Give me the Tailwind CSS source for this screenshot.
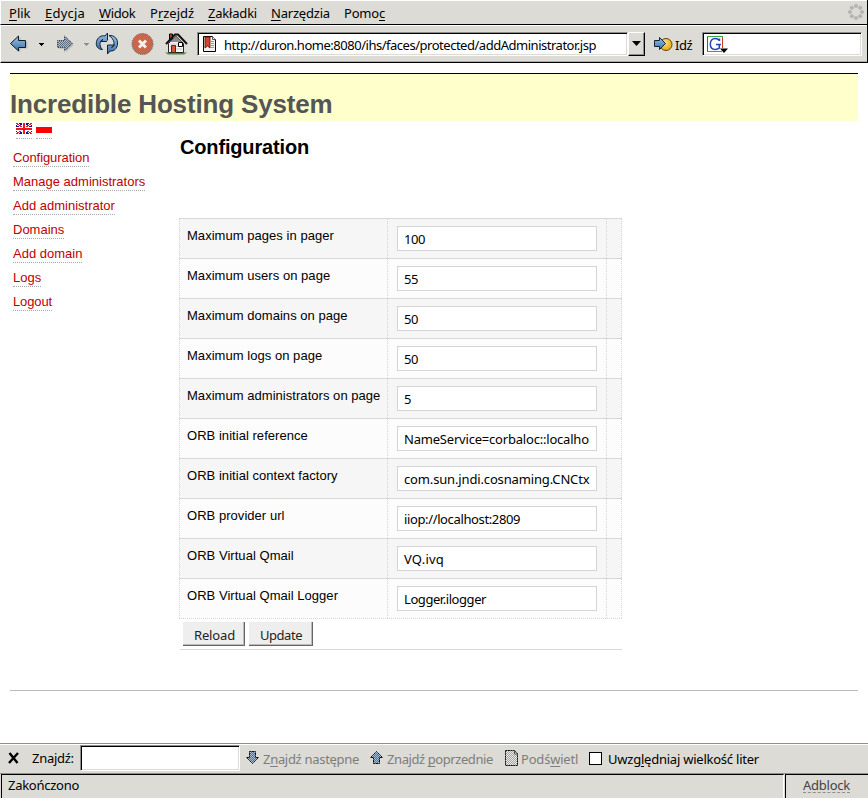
<!DOCTYPE html>
<html lang="pl">
<head>
<meta charset="utf-8">
<title>Incredible Hosting System</title>
<script src="https://cdn.jsdelivr.net/npm/@tailwindcss/browser@4"></script>
</head>
<body class="bg-white overflow-hidden">
<svg class="absolute w-0 h-0" aria-hidden="true"><defs>
  <pattern id="ckBlue" width="2" height="2" patternUnits="userSpaceOnUse"><rect width="2" height="2" fill="#a3bcd6"/><path d="M0 0h1v1H0zM1 1h1v1H1z" fill="#5f6f80"/></pattern>
  <pattern id="ckRed" width="2" height="2" patternUnits="userSpaceOnUse"><rect width="2" height="2" fill="#cf6f52"/><path d="M0 0h1v1H0zM1 1h1v1H1z" fill="#8f7466"/></pattern>
  <pattern id="ckGray" width="2" height="2" patternUnits="userSpaceOnUse"><rect width="2" height="2" fill="#e8e8e6"/><path d="M0 0h1v1H0zM1 1h1v1H1z" fill="#a4a4a2"/></pattern>
  <linearGradient id="gBlue" x1="0" y1="0" x2="0" y2="1"><stop offset="0" stop-color="#9cc3e6"/><stop offset="1" stop-color="#3a70a6"/></linearGradient>
  <radialGradient id="gGold" cx=".4" cy=".35"><stop offset="0" stop-color="#ffe680"/><stop offset="1" stop-color="#efb425"/></radialGradient>
</defs></svg>

<div class="flex flex-col w-[868px] h-[798px] text-[13px] leading-5 text-black whitespace-nowrap font-['Noto_Sans','Open_Sans',sans-serif]">

  <!-- Menu bar -->
  <header class="border-r border-black shrink-0">
    <nav class="flex items-start h-[25px] bg-[#dcdbd5] border-t border-t-white border-l border-l-white border-b border-b-black pl-2 pt-[2px] pr-[4px]">
      <span class="w-9"><u class="underline underline-offset-2 decoration-1">P</u>lik</span>
      <span class="w-[54px] tracking-[0.2px]"><u class="underline underline-offset-2 decoration-1">E</u>dycja</span>
      <span class="w-[51px] tracking-[-0.4px]"><u class="underline underline-offset-2 decoration-1">W</u>idok</span>
      <span class="w-[58px]">P<u class="underline underline-offset-2 decoration-1">r</u>zejdź</span>
      <span class="w-[63px] tracking-[-0.2px]"><u class="underline underline-offset-2 decoration-1">Z</u>akładki</span>
      <span class="w-[73px] tracking-[-0.2px]"><u class="underline underline-offset-2 decoration-1">N</u>arzędzia</span>
      <span class="tracking-[-0.2px]">Pomo<u class="underline underline-offset-2 decoration-1">c</u></span>
      <svg class="ml-auto mr-[-1px]" width="16" height="18" viewBox="0 0 16 18" fill="#b4b4b0"><circle cx="8" cy="3" r="2"/><circle cx="12.2" cy="4.8" r="2"/><circle cx="14" cy="9" r="2"/><circle cx="12.2" cy="13.2" r="2"/><circle cx="8" cy="15" r="2"/><circle cx="3.8" cy="13.2" r="2"/><circle cx="2" cy="9" r="2"/><circle cx="3.8" cy="4.8" r="2"/></svg>
    </nav>

    <!-- Navigation toolbar -->
    <div class="flex items-start h-[38px] bg-[#dcdbd5] border-t border-t-white border-l border-l-white border-b border-b-black pl-[9px] pt-[6px] shadow-[inset_0_-1px_0_#aaa9a4]">
      <svg class="w-[19px] mr-[9px]" height="24" viewBox="0 0 19 24"><path d="M2.500 12.500L10.500 5.500V9.500H17.500V16.500H10.500V20.500z" fill="#000" opacity=".15"/><path d="M.5 11.500L8.500 4V8.500H15.500V15.500H8.500V19z" fill="url(#gBlue)" stroke="#0d1a28"/></svg>
      <svg class="mr-[12px]" width="6" height="24" viewBox="0 0 6 24"><path d="M1 11h5v1H5v1H4v1H3v-1H2v-1H1z"/></svg>
      <svg class="mr-[8px]" width="19" height="24" viewBox="0 0 19 24"><path d="M18 13L10 20V17H3V10H10V6z" fill="#000" opacity=".12"/><path d="M16.500 11.500L8.500 4V8.500H1.500V15.500H8.500V19z" fill="url(#ckBlue)" stroke="#39434e" stroke-dasharray="1 1"/></svg>
      <svg class="mr-[6px]" width="6" height="24" viewBox="0 0 6 24"><path d="M1 11h5v1H5v1H4v1H3v-1H2v-1H1z" fill="#8d8d89"/></svg>
      <svg class="mr-[12px]" width="24" height="24" viewBox="0 0 24 24" stroke="#10243a" fill="url(#gBlue)" stroke-linejoin="round"><path d="M7.500 17.500C3 17.500 .5 14 1.500 9.500C2.500 5.500 6 3 10 4L12.500 1V9.500H5.500L8 7.500C5.500 8.500 4.800 10.500 5 12.500C5.200 14.800 6 16 7.500 17.500z"/><path d="M14 3.500C19.500 3 23 7 22.500 12C22.200 16.500 19 19.500 15 19L12.500 22V13H19.500L16.500 15.500C18.500 15 19.200 13 19 10.500C18.500 7.500 16.500 5 14 3.500z"/><path d="M13.500 8.500L9.500 14.500" stroke="#dcdbd5" stroke-width="1.500"/></svg>
      <svg class="mr-[11px]" width="23" height="24" viewBox="0 0 23 24"><circle cx="11.500" cy="12" r="10.500" fill="url(#ckRed)" stroke="#6b5550" stroke-dasharray="1 1"/><path d="M8 8.500L15 15.500M15 8.500L8 15.500" stroke="#f4f0ec" stroke-width="3"/></svg>
      <svg class="mr-[8px]" width="24" height="24" viewBox="0 0 24 24"><path d="M0 20.500h22l-3 2H3z" fill="#4f8a3c"/><path d="M4.500 2v6h3V2z" fill="#b5402a" stroke="#000"/><path d="M3.500 11.500L11 4L18.500 11.500V20.500H3.500z" fill="#f6f6f4" stroke="#222"/><path d="M5 12h12M5 14.500h12M5 17h12" stroke="#c2c2c0"/><path d="M1 12L10 2.500H13L22 12" fill="none" stroke="#111" stroke-width="2"/><path d="M5 10L11 4L17 10z" fill="#8c8c8a"/><path d="M6.500 13.500h4v7h-4z" fill="#d9573a" stroke="#333"/><path d="M13.500 10.500h4v4h-4z" fill="#fff" stroke="#000"/></svg>
      <div class="flex w-[431px] h-6 bg-white border border-[#8f8e8a] border-r-white border-b-white shadow-[inset_1px_1px_0_#000,inset_-1px_-1px_0_#dcdbd5]">
        <svg class="ml-[5px] mt-[3px] mr-[8px] shrink-0" width="13" height="16" viewBox="0 0 13 16"><path d="M.5 .5H9.500L12.500 3.500V15.500H.5z" fill="#f2f2f0" stroke="#000"/><path d="M9.500 .5v3h3" fill="#fff" stroke="#555"/><path d="M8 5.500h3M8 7.500h3M8 9.500h3M8 11.500h3" stroke="#999"/><path d="M2 1H7V12L4.500 10L2 12z" fill="#d8432a" stroke="#4c130a" stroke-width=".8"/></svg>
        <span class="pt-[2px] tracking-[-0.48px]">http://duron.home:8080/ihs/faces/protected/addAdministrator.jsp</span>
      </div>
      <div class="flex w-[17px] h-6 items-center justify-center bg-[#dcdbd5] border border-white border-r-black border-b-black shadow-[inset_-1px_-1px_0_#8f8e8a]"><svg width="9" height="6" viewBox="0 0 9 6"><path d="M0 0h9L4.500 5z"/></svg></div>
      <svg class="ml-[9px] mr-[2px]" width="19" height="24" viewBox="0 0 19 24"><circle cx="12" cy="12.500" r="6" fill="url(#gGold)" stroke="#5c4310"/><path d="M.5 8.500H5.500V5.500L11.500 11.500L5.500 17.500V14.500H.5z" fill="url(#gBlue)" stroke="#10223a"/></svg>
      <span class="w-[27px] pt-[3px] tracking-[-0.4px]">Idź</span>
      <div class="flex w-[160px] h-6 bg-white border border-[#8f8e8a] border-r-white border-b-white shadow-[inset_1px_1px_0_#000,inset_-1px_-1px_0_#dcdbd5]">
        <svg class="ml-[4px] mt-[2px]" width="22" height="19" viewBox="0 0 22 19"><path d="M.5 17V1.500" stroke="#2f55c8"/><path d="M0 1.500H16" stroke="#3aa648"/><path d="M15.500 2V13" stroke="#d8322a"/><path d="M0 16.500H15" stroke="#3aa648"/><path d="M12.500 6V3.500M12.300 5.500C11 3.800 9.800 3.500 8.300 3.500C5.200 3.500 3.300 5.700 3.300 9C3.300 12.300 5.200 14.500 8.300 14.500C10 14.500 11.300 14 12.300 13.200V9.500M9 9.500H14" fill="none" stroke="#2546b8" stroke-width="1.500"/><path d="M13 13.500h8L17 18z"/></svg>
      </div>
    </div>
  </header>

  <!-- Page -->
  <main class="flex flex-col h-[680px] shrink-0 px-[10px] pt-[10px] font-['Liberation_Sans',Arial,sans-serif]">
    <h1 class="h-12 shrink-0 bg-[#ffffcc] border-t border-black pt-[15px] text-[26px] leading-[30px] font-bold tracking-[-0.16px] text-[#555]">Incredible Hosting System</h1>
    <div class="flex h-[570px] border-b border-[#bbb] leading-4">
      <aside class="w-[169px] shrink-0 pl-[3px] pt-[2px]">
        <div class="flex gap-1 pl-[3px] mb-[11px]">
          <a class="h-4 border-b border-dotted border-[#aaa]"><svg width="16" height="11" viewBox="0 0 16 11" shape-rendering="crispEdges"><rect width="16" height="11" fill="#16168c"/><path d="M0 0L16 11M16 0L0 11" stroke="#fff" stroke-width="2.500"/><path d="M0 0L16 11M16 0L0 11" stroke="#f0141c" stroke-width="1"/><path d="M6 0h4v11H6zM0 4h16v4H0z" fill="#fff"/><path d="M7 0h2v11H7zM0 5h16v2H0z" fill="#f0141c"/></svg></a>
          <a class="h-4 border-b border-dotted border-[#aaa]"><svg width="16" height="11" viewBox="0 0 16 11"><rect width="16" height="4" fill="#fafafa"/><rect y="4" width="16" height="6" fill="#f00"/></svg></a>
        </div>
        <ul class="flex flex-col items-start gap-[7px] text-[#c00000]">
          <li class="h-[17px] border-b border-dotted border-[#aaa] tracking-[-0.08px]">Configuration</li>
          <li class="h-[17px] border-b border-dotted border-[#aaa]">Manage administrators</li>
          <li class="h-[17px] border-b border-dotted border-[#aaa]">Add administrator</li>
          <li class="h-[17px] border-b border-dotted border-[#aaa]">Domains</li>
          <li class="h-[17px] border-b border-dotted border-[#aaa]">Add domain</li>
          <li class="h-[17px] border-b border-dotted border-[#aaa]">Logs</li>
          <li class="h-[17px] border-b border-dotted border-[#aaa] tracking-[-0.12px]">Logout</li>
        </ul>
      </aside>
      <section class="w-[443px] pt-[14px]">
        <h2 class="pl-[1px] mb-[59px] text-[20px] leading-6 font-bold tracking-[-0.16px]">Configuration</h2>
        <div id="rows" class="border-b border-dotted border-[#d4d4d4]"></div>
        <div class="flex gap-1 h-[31px] ml-[1px] pl-[3px] pt-[3px] border-b border-[#d8d8d8] text-[#222] leading-5 font-['Noto_Sans','Open_Sans',sans-serif]">
          <button class="block w-[62px] h-6 pt-[3px] pl-[2px] bg-[#eee] border-r border-b border-[#666] shadow-[inset_-1px_-1px_0_#bbb] tracking-[-0.15px] leading-5">Reload</button>
          <button class="block w-[64px] h-6 pt-[3px] pl-[1px] bg-[#eee] border-r border-b border-[#666] shadow-[inset_-1px_-1px_0_#bbb] tracking-[-0.45px] leading-5">Update</button>
        </div>
      </section>
    </div>
  </main>

  <!-- Find bar -->
  <div class="flex items-start h-[30px] shrink-0 bg-[#dcdbd5] border-t border-[#8f8e8a] shadow-[inset_0_1px_0_#fff] text-[#7d7d7a]">
    <svg class="ml-[8px] mt-[8px] mr-[12px]" width="12" height="12" viewBox="0 0 12 12"><path d="M1.500 1L9.500 11M10 1L1 11" stroke="#000" stroke-width="2.400"/></svg>
    <span class="w-[48px] pt-[4px] tracking-[-0.28px] text-black">Znajdź:</span>
    <div class="w-[160px] h-[26px] mt-[1px] bg-white border border-[#8f8e8a] border-r-white border-b-white shadow-[inset_1px_1px_0_#000,inset_-1px_-1px_0_#dcdbd5]"></div>
    <svg class="ml-[6px] mt-[7px] mr-[3px]" width="14" height="14" viewBox="0 0 14 14"><path d="M3.500 .5H9.500V6.500H12.500L6.500 12.500L.5 6.500H3.500z" fill="url(#ckBlue)" stroke="#111" stroke-dasharray="2 .5"/></svg>
    <span class="w-[107px] pt-[5px] tracking-[-0.3px]">Z<u class="underline underline-offset-2 decoration-1">n</u>ajdź następne</span>
    <svg class="mt-[7px] mr-[3px]" width="14" height="14" viewBox="0 0 14 14"><path d="M3.500 12.500H9.500V6.500H12.500L6.500 .5L.5 6.500H3.500z" fill="url(#ckBlue)" stroke="#111" stroke-dasharray="2 .5"/></svg>
    <span class="w-[118px] pt-[5px] tracking-[-0.42px]">Znajdź <u class="underline underline-offset-2 decoration-1 [text-decoration-skip-ink:none]">p</u>oprzednie</span>
    <svg class="mt-[6px] mr-[2px]" width="14" height="17" viewBox="0 0 14 17"><path d="M.5 .5H9.500L12.500 3.500V15.500H.5z" fill="url(#ckGray)" stroke="#111" stroke-dasharray="2 .5"/><path d="M9.500 1v3h3" fill="none" stroke="#555"/></svg>
    <span class="w-[68px] pt-[5px] tracking-[-0.2px]">Podś<u class="underline underline-offset-2 decoration-1">w</u>ietl</span>
    <div class="w-[13px] h-[13px] mt-[8px] mr-[6px] bg-white border border-black"></div>
    <span class="pt-[5px] tracking-[-0.23px] text-black">Uwzg<u class="underline underline-offset-2 decoration-1">l</u>ędniaj wielkość liter</span>
  </div>

  <!-- Status bar -->
  <footer class="flex h-[25px] shrink-0 bg-[#dcdbd5] border-t border-[#8f8e8a]">
    <div class="w-[783px] ml-[1px] border-t border-l border-black border-r border-r-white pl-[6px] tracking-[-0.27px]">Zakończono</div>
    <div class="w-[83px] ml-[1px] border-t border-l border-black pl-[17px]"><span class="inline-block h-[18px] border-b border-dashed border-[#8f8e8a] tracking-[-0.25px] text-[#444]">Adblock</span></div>
  </footer>
</div>

<script>
const rows = [
  ['Maximum pages in pager', '100', -0.4],
  ['Maximum users on page', '55', -0.4],
  ['Maximum domains on page', '50', -0.4],
  ['Maximum logs on page', '50', -0.4],
  ['Maximum administrators on page', '5', 0],
  ['ORB initial reference', 'NameService=corbaloc::localho', -0.2],
  ['ORB initial context factory', 'com.sun.jndi.cosnaming.CNCtx', -0.15],
  ['ORB provider url', 'iiop://localhost:2809', -0.37],
  ['ORB Virtual Qmail', 'VQ.ivq', 0.2],
  ['ORB Virtual Qmail Logger', 'Logger.ilogger', -0.43]
];
document.getElementById('rows').innerHTML = rows.map(([label, value, track], i) => `
  <div class="grid grid-cols-[208px_219px_16px] h-10 border-t border-[#d8d8d8] ${i % 2 ? 'bg-[#fcfcfc]' : 'bg-[#f6f6f6]'}">
    <div class="border-l border-dotted border-[#d4d4d4] pl-[7px] pt-[9px] tracking-[0.04px]">${label}</div>
    <div class="border-l border-dotted border-[#d4d4d4] pl-[9px] pt-[7px]">
      <div class="w-[200px] h-[25px] bg-white border border-[#d4d4d4] pl-[6px] pt-[2px] leading-5 font-['Noto_Sans','Open_Sans',sans-serif]" style="letter-spacing:${track}px">${value}</div>
    </div>
    <div class="border-x border-dotted border-[#d4d4d4]"></div>
  </div>`).join('');
</script>
</body>
</html>
